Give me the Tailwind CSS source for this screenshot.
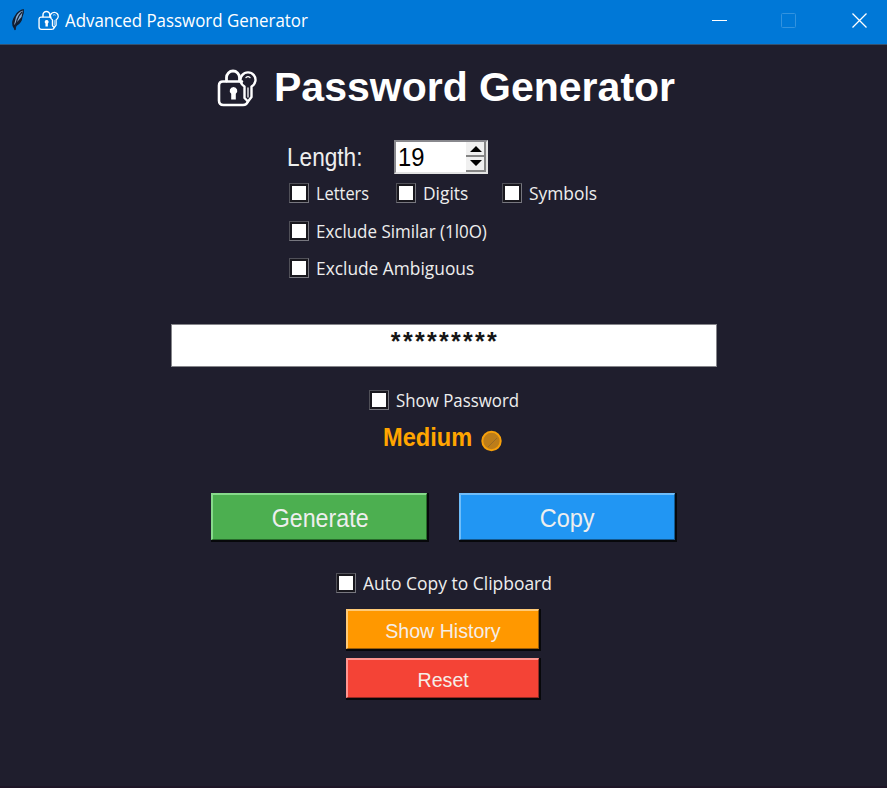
<!DOCTYPE html>
<html lang="en">
<head>
<meta charset="utf-8">
<title>Advanced Password Generator</title>
<script src="https://cdn.jsdelivr.net/npm/@tailwindcss/browser@4"></script>
</head>
<body class="w-[887px] h-[788px] overflow-hidden bg-[#1f1e2d] font-['Liberation_Sans',sans-serif] text-white">
<svg class="hidden">
  <symbol id="lock" viewBox="0 0 40 38">
    <g fill="none" stroke="currentColor" stroke-linecap="round" stroke-linejoin="round">
      <path stroke-width="2.6" d="M25 12.500H6Q2 12.500 2 16.500V31.500Q2 36 6.500 36H26Q30 36 31 32"/>
      <path stroke-width="2.8" d="M9.500 12V8.500A6.500 6.500 0 0 1 22.500 8.500V12"/>
      <path stroke-width="2.4" d="M27.500 17.500A7.500 7.500 0 1 1 34.500 17.500V28L31 32.500L27.500 29Z"/>
      <path stroke-width="1.300" d="M29 8.500Q31 6.800 33 8.500M31 19V28"/>
    </g>
    <path fill="currentColor" d="M16.500 18A3.800 3.800 0 0 1 18.800 24.800V30.500H14.200V24.800A3.800 3.800 0 0 1 16.500 18Z"/>
  </symbol>
</svg>
<div class="w-full h-full flex flex-col border-b-2 border-[#1e1627]">
  <header class="h-[45px] shrink-0 flex items-center bg-[#0078d7] border-b border-[#35516f] font-['Open_Sans',sans-serif]">
    <svg class="w-[16px] h-[24px] ml-[10px] -mt-1" viewBox="0 0 16 24">
      <path d="M13.800 1Q8 2.200 5 7.500Q1 13 2.500 18L5 22.500L6.500 18Q12 15 12.500 9Q14.500 4.500 13.800 1Z" fill="#101d30"/>
      <path d="M12.800 2.500Q8 4 6 9L4 17L8 13L11.500 9Z" fill="#86aacf"/>
      <path d="M12 4Q6 10 5 22M7.500 15L11 12" fill="none" stroke="#152238" stroke-width="1.200"/>
    </svg>
    <svg class="w-[21px] h-[21px] ml-[12px] -mt-[3px]"><use href="#lock"/></svg>
    <span class="ml-[6px] -mt-[5px] text-[18px] leading-6 whitespace-nowrap origin-left scale-x-[.938]">Advanced Password Generator</span>
    <svg class="w-[156px] h-[16px] ml-auto mr-[19px] -mt-[2px]" viewBox="0 0 156 16" fill="none">
      <path d="M0 7.500H15" stroke="#fff"/>
      <rect x="69.500" y=".5" width="14" height="14" rx="1" stroke="#3393df"/>
      <path d="M140.500 .5L154.500 14.500M154.500 .5L140.500 14.500" stroke="#fff" stroke-width="1.300"/>
    </svg>
  </header>
  <main class="flex flex-col items-start">
    <h1 class="flex items-center h-[48px] mt-[19px] ml-[217px] text-[41px] font-bold whitespace-nowrap">
      <svg class="w-[40px] h-[38px] mr-[17px]"><use href="#lock"/></svg><span>Password Generator</span>
    </h1>
    <div class="flex items-center h-[34px] mt-[28px] ml-[287px]">
      <span class="w-[107px] pt-px text-[25px] text-[#eee]"><span class="inline-block origin-left scale-x-[.905]">Length:</span></span>
      <div class="w-[94px] h-[34px] bg-white border-2 border-t-[#88888d] border-l-[#88888d] border-r-[#e3e3e3] border-b-[#e3e3e3] flex justify-between text-black">
        <span class="ml-[2px] text-[25px] leading-[31px] origin-left scale-x-[.95]">19</span>
        <svg class="w-[20px] h-[30px]" viewBox="0 0 20 30">
          <path fill="#f0f0f0" d="M0 0H20V30H0Z"/>
          <path fill="#858585" d="M0 13H20V15H0ZM0 28H20V30H0ZM18 0H20V30H18Z"/>
          <path fill="#000" d="M4 10L10 4L16 10ZM4 18H16L10 24Z"/>
        </svg>
      </div>
    </div>
    <div class="flex h-[38px] ml-[289px] font-['Open_Sans',sans-serif] text-[18px] text-[#eee]">
      <label class="flex items-center w-[107px]"><i class="w-[20px] h-[20px] mr-[7px] bg-white border border-t-[#505058] border-l-[#505058] border-r-[#77777f] border-b-[#77777f] ring-2 ring-inset ring-[#19181e]"></i><span class="pt-px origin-left scale-x-[.91]">Letters</span></label>
      <label class="flex items-center w-[106px]"><i class="w-[20px] h-[20px] mr-[7px] bg-white border border-t-[#505058] border-l-[#505058] border-r-[#77777f] border-b-[#77777f] ring-2 ring-inset ring-[#19181e]"></i><span class="pt-px origin-left scale-x-[.965]">Digits</span></label>
      <label class="flex items-center"><i class="w-[20px] h-[20px] mr-[7px] bg-white border border-t-[#505058] border-l-[#505058] border-r-[#77777f] border-b-[#77777f] ring-2 ring-inset ring-[#19181e]"></i><span class="pt-px origin-left scale-x-[.965]">Symbols</span></label>
    </div>
    <label class="flex items-center h-[37px] ml-[289px] font-['Open_Sans',sans-serif] text-[18px] text-[#eee]"><i class="w-[20px] h-[20px] mr-[7px] bg-white border border-t-[#505058] border-l-[#505058] border-r-[#77777f] border-b-[#77777f] ring-2 ring-inset ring-[#19181e]"></i><span class="pt-px origin-left scale-x-[.942]">Exclude Similar (1l0O)</span></label>
    <label class="flex items-center h-[38px] ml-[289px] font-['Open_Sans',sans-serif] text-[18px] text-[#eee]"><i class="w-[20px] h-[20px] mr-[7px] bg-white border border-t-[#505058] border-l-[#505058] border-r-[#77777f] border-b-[#77777f] ring-2 ring-inset ring-[#19181e]"></i><span class="pt-px origin-left scale-x-[.963]">Exclude Ambiguous</span></label>
    <div class="w-[546px] h-[43px] mt-[37px] ml-[171px] bg-white border border-[#85858a] text-center text-[#151515]"><span class="block pl-[2px] text-[25px] leading-[32px] tracking-[2.3px] font-bold">*********</span></div>
    <label class="flex items-center h-[36px] mt-[15px] ml-[369px] font-['Open_Sans',sans-serif] text-[18px] text-[#eee]"><i class="w-[20px] h-[20px] mr-[7px] bg-white border border-t-[#505058] border-l-[#505058] border-r-[#77777f] border-b-[#77777f] ring-2 ring-inset ring-[#19181e]"></i><span class="pt-px origin-left scale-x-[.936]">Show Password</span></label>
    <div class="flex items-center h-[38px] ml-[383px] text-[25px] font-bold text-[#ffa500]">
      <span class="w-[97px] pt-px origin-left scale-x-[.945]">Medium</span>
      <svg class="w-[22px] h-[22px] mt-[7px]" viewBox="0 0 22 22"><circle cx="11.500" cy="11" r="9.200" fill="#bd7d19" stroke="#f7a00b" stroke-width="2"/><path d="M8 17L17 8" stroke="#996b25"/></svg>
    </div>
    <div class="flex gap-[30px] mt-[37px] ml-[211px] text-[25px] text-[#eee]">
      <div class="w-[218px] h-[49px] border-r-2 border-b-2 border-[#07080b]"><div class="w-full h-full bg-[#4caf50] border-t-2 border-l-2 border-r border-b border-t-[#87da8b] border-l-[#87da8b] border-r-[#286b2b] border-b-[#286b2b] flex items-center justify-center"><span class="mt-[3px] ml-px scale-x-[.93]">Generate</span></div></div>
      <div class="w-[218px] h-[49px] border-r-2 border-b-2 border-[#07080b]"><div class="w-full h-full bg-[#2196f3] border-t-2 border-l-2 border-r border-b border-t-[#6fbdf9] border-l-[#6fbdf9] border-r-[#14598f] border-b-[#14598f] flex items-center justify-center"><span class="mt-[3px] scale-x-[.94]">Copy</span></div></div>
    </div>
    <label class="flex items-center h-[36px] mt-[23px] ml-[336px] font-['Open_Sans',sans-serif] text-[18px] text-[#eee]"><i class="w-[20px] h-[20px] mr-[7px] bg-white border border-t-[#505058] border-l-[#505058] border-r-[#77777f] border-b-[#77777f] ring-2 ring-inset ring-[#19181e]"></i><span class="pt-px origin-left scale-x-[.97]">Auto Copy to Clipboard</span></label>
    <div class="flex flex-col gap-[7px] mt-[8px] ml-[346px] text-[20px] text-[#f5eee8]">
      <div class="w-[195px] h-[42px] border-r-2 border-b-2 border-[#07080b]"><div class="w-full h-full bg-[#ff9800] border-t-2 border-l-2 border-r border-b border-t-[#ffca77] border-l-[#ffca77] border-r-[#9a5d08] border-b-[#9a5d08] flex items-center justify-center"><span class="mt-[3px] scale-x-[.98]">Show History</span></div></div>
      <div class="w-[195px] h-[42px] border-r-2 border-b-2 border-[#07080b]"><div class="w-full h-full bg-[#f44336] border-t-2 border-l-2 border-r border-b border-t-[#ff9690] border-l-[#ff9690] border-r-[#942a23] border-b-[#942a23] flex items-center justify-center"><span class="mt-[3px] scale-x-[.98]">Reset</span></div></div>
    </div>
  </main>
</div>
</body>
</html>
